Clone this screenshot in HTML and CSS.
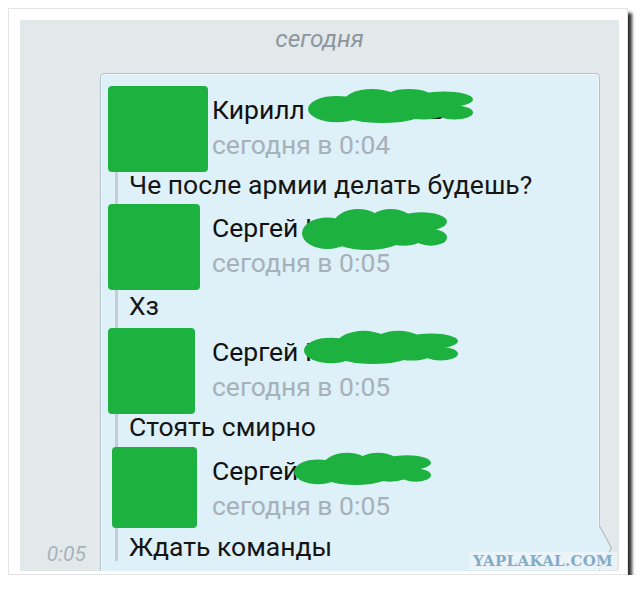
FILE: index.html
```html
<!DOCTYPE html>
<html lang="ru">

<head>
    <meta charset="UTF-8">
    <meta name="viewport" content="width=device-width, initial-scale=1.0">
    <title>Переписка</title>
    <link rel="stylesheet" href="styles.css">
</head>

<body>
    <div class="photo">
        <div class="screen">
            <div class="day">сегодня</div>

            <div class="row">
                <div class="stamp">0:05</div>
                <div class="bubble">
                    <div class="thread">

                        <div class="msg msg1">
                            <div class="head">
                                <div class="avatar av1"></div>
                                <div class="meta">
                                    <div class="name">Кирилл <span class="peek">в</span></div>
                                    <div class="time">сегодня в 0:04</div>
                                </div>
                            </div>
                            <div class="text">Че после армии делать будешь?</div>
                            <svg class="blob b1" viewBox="0 0 160 40" preserveAspectRatio="none">
                                <use href="#cloud"/>
                            </svg>
                        </div>

                        <div class="msg msg2">
                            <div class="head">
                                <div class="avatar av2"></div>
                                <div class="meta">
                                    <div class="name">Сергей К</div>
                                    <div class="time">сегодня в 0:05</div>
                                </div>
                            </div>
                            <div class="text">Хз</div>
                            <svg class="blob b2" viewBox="0 0 160 40" preserveAspectRatio="none">
                                <use href="#cloud"/>
                            </svg>
                        </div>

                        <div class="msg msg3">
                            <div class="head">
                                <div class="avatar av3"></div>
                                <div class="meta">
                                    <div class="name">Сергей К</div>
                                    <div class="time">сегодня в 0:05</div>
                                </div>
                            </div>
                            <div class="text">Стоять смирно</div>
                            <svg class="blob b3" viewBox="0 0 160 40" preserveAspectRatio="none">
                                <use href="#cloud"/>
                            </svg>
                        </div>

                        <div class="msg msg4">
                            <div class="head">
                                <div class="avatar av4"></div>
                                <div class="meta">
                                    <div class="name">Сергей К</div>
                                    <div class="time">сегодня в 0:05</div>
                                </div>
                            </div>
                            <div class="text">Ждать команды</div>
                            <svg class="blob b4" viewBox="0 0 160 40" preserveAspectRatio="none">
                                <use href="#cloud"/>
                            </svg>
                        </div>

                    </div>
                    <!-- little arrow on the right side of the bubble -->
                    <svg class="tail" width="16" height="44" viewBox="0 0 16 44">
                        <polygon points="0,0 2,0 14,22 2,42 0,42" fill="#def0f8"/>
                        <polyline points="1.5,0 13.5,22 2,42" fill="none" stroke="#aebdc7" stroke-width="1.2"/>
                    </svg>
                </div>
            </div>

            <div class="watermark">YAPLAKAL.COM</div>
        </div>
    </div>

    <!-- green scribble used to hide the surnames -->
    <svg width="0" height="0" class="defs">
        <defs>
            <g id="cloud" fill="#1db140">
                <ellipse cx="28" cy="24" rx="28" ry="15"/>
                <ellipse cx="62" cy="17" rx="28" ry="16"/>
                <ellipse cx="98" cy="16" rx="27" ry="15"/>
                <ellipse cx="72" cy="28" rx="40" ry="12"/>
                <ellipse cx="132" cy="13" rx="28" ry="9"/>
                <ellipse cx="142" cy="28" rx="18" ry="8"/>
                <ellipse cx="112" cy="26" rx="24" ry="10"/>
            </g>
        </defs>
    </svg>
</body>

</html>
```

FILE: styles.css
```css
body {
    margin: 0;
    background-color: #fff;
    font-family: Roboto, "Noto Sans", sans-serif;
}

.defs {
    position: absolute;
}

.photo {
    margin: 8px 0 0 8px;
    width: 620px;
    height: 567px;
    box-sizing: border-box;
    padding: 11px 8px 3px 11px;
    border: 1px solid #e4e4e4;
    background-color: #fff;
    box-shadow: 4px 5px 3px rgba(0, 0, 0, 0.8);
}

.screen {
    position: relative;
    height: 551px;
    overflow: hidden;
    background-color: #e3e8eb;
}

.day {
    padding-top: 7px;
    font-size: 24.5px;
    line-height: 24px;
    font-style: italic;
    text-align: center;
    color: #8c969e;
}

.row {
    display: flex;
    align-items: flex-end;
    margin-top: 22px;
}

.stamp {
    width: 80px;
    box-sizing: border-box;
    padding-right: 14px;
    margin-bottom: 18px;
    font-size: 21px;
    line-height: 21px;
    font-style: italic;
    text-align: right;
    color: #a8b2ba;
}

.bubble {
    position: relative;
    width: 500px;
    height: 510px;
    box-sizing: border-box;
    padding: 12px 0 0 7px;
    border: 1px solid #b4c4ce;
    border-radius: 4px;
    background-color: #def0f8;
    box-shadow: inset 0 0 0 1px #eef8fc;
}

.thread {
    margin-left: 7px;
    border-left: 3px solid #c5cdd2;
}

.msg {
    position: relative;
}

.head {
    display: grid;
    grid-template-columns: 104px auto;
    margin-left: -10px;
}

.avatar {
    width: 100px;
    height: 86px;
    border-radius: 4px;
    background-color: #1db140;
}

.av2 {
    width: 92px;
}

.av3 {
    width: 87px;
}

.av4 {
    width: 85px;
    height: 81px;
    margin-left: 4px;
}

.meta {
    padding-top: 9px;
}

.name {
    font-size: 26.5px;
    line-height: 30px;
    color: #111;
    white-space: nowrap;
}

.peek {
    margin-left: 118px;
}

.time {
    margin-top: 5px;
    font-size: 26.5px;
    line-height: 30px;
    color: #a6b1b9;
}

.text {
    padding-left: 11px;
    font-size: 26.5px;
    line-height: 28px;
    color: #151515;
}

.msg1 .text {
    margin-top: -1px;
    margin-bottom: 5px;
}

.msg2 .text {
    margin-top: 2px;
    margin-bottom: 8px;
}

.msg3 .text {
    margin-top: -1px;
    margin-bottom: 6px;
}

.msg4 .text {
    margin-top: 5px;
}

.blob {
    position: absolute;
}

.b1 {
    left: 190px;
    top: 2px;
    width: 165px;
    height: 35px;
}

.b2 {
    left: 184px;
    top: 4px;
    width: 145px;
    height: 42px;
}

.b3 {
    left: 186px;
    top: 2px;
    width: 154px;
    height: 34px;
}

.b4 {
    left: 176px;
    top: 5px;
    width: 137px;
    height: 33px;
}

.tail {
    position: absolute;
    right: -15px;
    top: 452px;
}

.watermark {
    position: absolute;
    right: 2px;
    bottom: 1px;
    width: 148px;
    height: 18px;
    background-color: rgba(238, 246, 250, 0.75);
    font-family: "DejaVu Serif", serif;
    font-weight: bold;
    font-size: 15px;
    line-height: 18px;
    letter-spacing: 0.3px;
    text-align: center;
    color: #86abc6;
}
```
